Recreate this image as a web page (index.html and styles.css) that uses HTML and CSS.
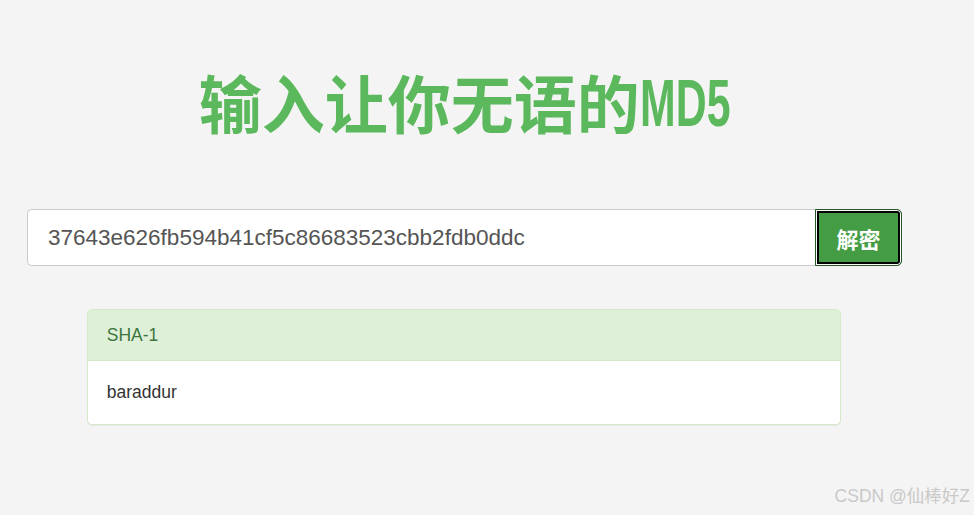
FILE: index.html
```html
<!DOCTYPE html>
<html lang="zh-CN">
<head>
  <meta charset="UTF-8">
  <title>MD5</title>
  <link rel="stylesheet" href="styles.css">
</head>
<body>
<div class="container">
  <h1 class="title">输入让你无语的<span class="latin">MD5</span></h1>

  <div class="input-group">
    <input class="form-control" type="text" value="37643e626fb594b41cf5c86683523cbb2fdb0ddc">
    <button class="btn">解密</button>
  </div>

  <div class="panel">
    <div class="panel-heading">SHA-1</div>
    <div class="panel-body">baraddur</div>
  </div>
</div>

<div class="watermark">CSDN @仙棒好Z</div>
</body>
</html>
```

FILE: styles.css
```css
html, body { height: 100%; }
body {
  margin: 0;
  background: #f4f4f4;
  font-family: "Liberation Sans", Arial, "Noto Sans CJK SC", sans-serif;
  color: #333;
  position: relative;
  overflow: hidden;
}
.container { width: 875px; margin-left: 27px; padding-top: 58px; }

.title {
  margin: 0;
  text-align: center;
  font-family: "Noto Sans CJK SC", sans-serif;
  font-weight: 700;
  font-size: 63px;
  line-height: 86px;
  color: #5cb85c;
}
.title .latin {
  display: inline-block;
  font-family: "Liberation Sans", sans-serif;
  font-weight: bold;
  font-size: 67px;
  transform: scaleX(0.64);
  transform-origin: left center;
  margin-right: -51px;
  position: relative;
  top: -2px;
}

.input-group { display: flex; margin-top: 61px; height: 57px; }
.form-control {
  flex: 1;
  height: 57px;
  box-sizing: border-box;
  margin: 0;
  padding: 0 20px;
  border: 1px solid #ccc;
  border-right: none;
  border-radius: 5px 0 0 5px;
  background: #fff;
  font-family: "Liberation Sans", Arial, sans-serif;
  font-size: 22.5px;
  color: #555;
  outline: none;
}
.btn {
  width: 87px;
  height: 57px;
  box-sizing: border-box;
  margin: 0;
  border: 1px solid #255625;
  border-radius: 0 5px 5px 0;
  background: #449d44;
  box-shadow: inset 0 0 0 1px #fff, inset 0 0 0 3px #000;
  color: #fff;
  font-family: "Noto Sans CJK SC", sans-serif;
  font-weight: bold;
  font-size: 22px;
  cursor: pointer;
}

.panel {
  width: 754px;
  box-sizing: border-box;
  margin: 43px 0 0 60px;
  background: #fff;
  border: 1px solid #d6e9c6;
  border-radius: 5px;
  box-shadow: 0 1px 1px rgba(0, 0, 0, .05);
  font-size: 17.5px;
  line-height: 25px;
}
.panel-heading {
  padding: 12.5px 18.75px;
  background: #dff0d8;
  color: #3c763d;
  border-bottom: 1px solid #d6e9c6;
  border-radius: 4px 4px 0 0;
}
.panel-body { padding: 18.75px; color: #333; }

.watermark {
  position: absolute;
  right: 4px;
  bottom: 8px;
  font-family: "Liberation Sans", "Noto Sans CJK SC", sans-serif;
  font-size: 17.5px;
  color: #c9c9c9;
}
```
